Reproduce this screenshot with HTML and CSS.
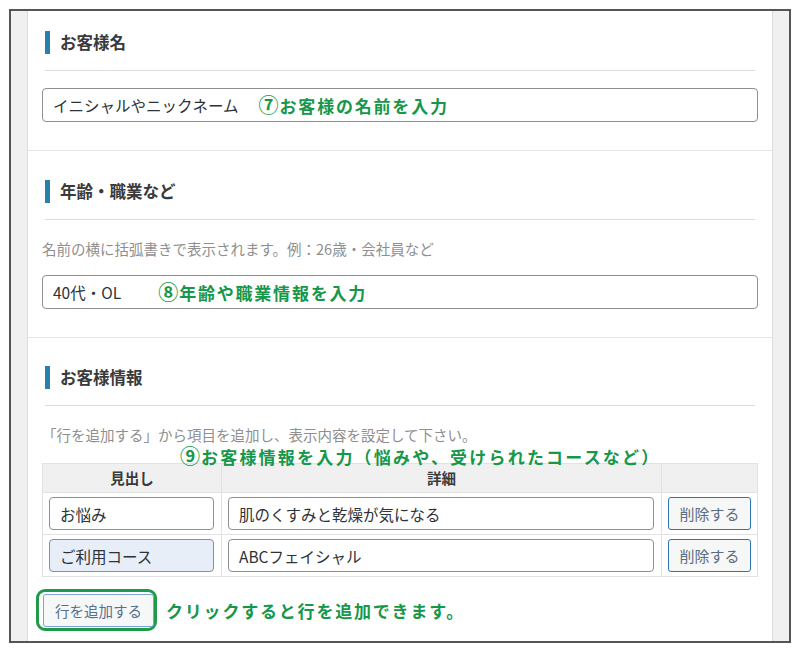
FILE: index.html
```html
<!DOCTYPE html>
<html lang="ja">
<head>
<meta charset="utf-8">
<title>お客様情報</title>
<link rel="stylesheet" href="styles.css">
</head>
<body>
<div class="frame">
  <div class="strip strip-left"></div>
  <main class="main">
    <section class="box box-first">
      <h2 class="box-title"><span class="bar"></span>お客様名</h2>
      <div class="field field-wide"><span class="val">イニシャルやニックネーム</span><span class="note note-a"><span class="num">⑦</span>お客様の名前を入力</span></div>
    </section>

    <section class="box">
      <h2 class="box-title"><span class="bar"></span>年齢・職業など</h2>
      <p class="desc">名前の横に括弧書きで表示されます。例：26歳・会社員など</p>
      <div class="field field-wide"><span class="val">40代・OL</span><span class="note note-b"><span class="num">⑧</span>年齢や職業情報を入力</span></div>
    </section>

    <section class="box box-last">
      <h2 class="box-title"><span class="bar"></span>お客様情報</h2>
      <p class="desc">「行を追加する」から項目を追加し、表示内容を設定して下さい。</p>
      <p class="note note-c"><span class="num">⑨</span>お客様情報を入力（悩みや、受けられたコースなど）</p>
      <table class="info">
        <colgroup><col class="c1"><col class="c2"><col class="c3"></colgroup>
        <thead>
          <tr><th>見出し</th><th>詳細</th><th></th></tr>
        </thead>
        <tbody>
          <tr>
            <td><div class="field">お悩み</div></td>
            <td><div class="field">肌のくすみと乾燥が気になる</div></td>
            <td><button class="btn-del" type="button">削除する</button></td>
          </tr>
          <tr>
            <td><div class="field field-filled">ご利用コース</div></td>
            <td><div class="field">ABCフェイシャル</div></td>
            <td><button class="btn-del" type="button">削除する</button></td>
          </tr>
        </tbody>
      </table>
      <div class="add-row">
        <div class="ring"><button class="btn-add" type="button">行を追加する</button></div>
        <span class="note">クリックすると行を追加できます。</span>
      </div>
    </section>
  </main>
  <div class="strip strip-right"></div>
</div>
</body>
</html>
```

FILE: styles.css
```css
* { box-sizing: border-box; }

html, body {
  margin: 0;
  padding: 0;
  background: #ffffff;
}

body {
  font-family: "Noto Sans CJK JP", "Noto Sans", sans-serif;
  color: #2c3338;
}

.frame {
  margin: 9px 0 0 9px;
  width: 782px;
  height: 634px;
  border: 2px solid #555555;
  display: flex;
  overflow: hidden;
}

.strip {
  width: 17px;
  flex: none;
  background: #f0f0f0;
}

.strip-left { border-right: 1px solid #dcdcdc; }
.strip-right { border-left: 1px solid #dcdcdc; }

.main {
  flex: 1;
  background: #ffffff;
  overflow: hidden;
}

.box {
  padding: 29px 14px 28px;
  border-bottom: 1px solid #e6e6e6;
}

.box-first { padding-top: 20px; }
.box-last { padding-top: 28px; border-bottom: none; }

.box-title {
  margin: 0 3px;
  padding-bottom: 16px;
  border-bottom: 1px solid #dcdcde;
  display: flex;
  align-items: center;
  gap: 10px;
  font-size: 16.5px;
  line-height: 23px;
  font-weight: 700;
  color: #3a3a3a;
}

.bar {
  width: 5px;
  height: 23px;
  background: #2781ab;
}

.desc {
  margin: 19px 0 0;
  font-size: 14.5px;
  line-height: 20px;
  color: #8f8f8f;
}

.field {
  height: 34px;
  border: 1px solid #8c8f94;
  border-radius: 4px;
  background: #ffffff;
  padding: 0 10px;
  display: flex;
  align-items: center;
  font-size: 15.5px;
  color: #2c3338;
  white-space: nowrap;
}

.box-first .field-wide { margin-top: 17px; }
.desc + .field-wide { margin-top: 16px; }

.field-filled { background: #e7eef8; }

.note {
  font-size: 17px;
  font-weight: 700;
  letter-spacing: 1.8px;
  color: #16974a;
  white-space: nowrap;
}

.num {
  font-size: 20px;
  line-height: 0;
  letter-spacing: 0;
  margin-right: 1px;
}

.note-a { margin-left: 20px; }
.note-b { margin-left: 37px; }

.note-c {
  position: relative;
  margin: 3px 0 -3px 138px;
  line-height: 18px;
  letter-spacing: 2.2px;
}

.info {
  width: 100%;
  border-collapse: collapse;
  table-layout: fixed;
}

.c1 { width: 179px; }
.c3 { width: 96px; }

.info th {
  background: #f0f0f0;
  border: 1px solid #e2e2e2;
  font-size: 14.5px;
  font-weight: 700;
  line-height: 20px;
  padding: 4px 6px;
  color: #3a3a3a;
  text-align: center;
}

.info td {
  border: 1px solid #e2e2e2;
  padding: 4px 7px 4px 6px;
}

.info .field { height: 33px; }

.btn-del {
  width: 83px;
  height: 33px;
  border: 1px solid #2d74b4;
  border-radius: 3px;
  background: #f6f7f7;
  color: #5b6d80;
  font-family: inherit;
  font-size: 15px;
  padding: 0;
}

.add-row {
  margin-top: 12px;
  margin-left: -6px;
  display: flex;
  align-items: center;
  gap: 9px;
}

.ring {
  border: 3px solid #1e9a4a;
  border-radius: 9px;
  padding: 2px 0 1px 4px;
}

.btn-add {
  display: block;
  width: 111px;
  height: 33px;
  border: 1px solid #7ea5d2;
  border-radius: 3px;
  background: #f6f7f7;
  color: #56718d;
  font-family: inherit;
  font-size: 14.5px;
  padding: 0;
}
```
